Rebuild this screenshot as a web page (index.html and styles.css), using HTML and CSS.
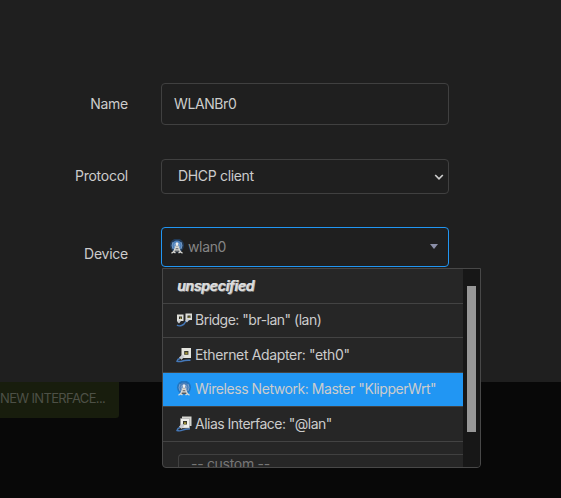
FILE: index.html
```html
<!DOCTYPE html>
<html lang="en">
<head>
<meta charset="utf-8">
<title>Add new interface</title>
<link rel="stylesheet" href="styles.css">
</head>
<body>
<svg class="symbols" width="0" height="0" aria-hidden="true">
  <symbol id="wifi" viewBox="0 0 16 16">
    <circle cx="8" cy="6.5" r="7" fill="#24568f" opacity=".5"/>
    <circle cx="8" cy="6.5" r="5" fill="#4b7fba"/>
    <path d="M4 3Q2 6.5 4 10M12 3q2 3.5 0 7M5.8 4.5q-1 2 0 4M10.2 4.5q1 2 0 4" fill="none" stroke="#86a9d0" stroke-width=".8"/>
    <path d="M8 5 4.5 13h7z" fill="#555a60"/>
    <path d="M8 5 4.5 13M8 5l3.5 8M6.5 8.5h3M5.5 10.8h5" fill="none" stroke="#d8d8d4" stroke-width="1.3"/>
    <path d="M2.5 14.3 4.5 12.8l2 1M13.5 14.3l-2-1.5-2 1" fill="none" stroke="#d8d8d4" stroke-width="1.3"/>
    <circle cx="8" cy="4.8" r="1.5" fill="#eee"/>
  </symbol>
  <symbol id="bridge" viewBox="0 0 16 16">
    <path d="M1 13q1.500 1.500 4.500.5t4-3.500 4-2" fill="none" stroke="#4578b8" stroke-width="1.4"/>
    <path d="M1 2.500h6.500V9H1zM9.500 1.500H16V8H9.500z" fill="#deded8"/>
    <path d="M3 4.500h3V7H3zM11.500 3.500h3V6h-3z" fill="#35352d"/>
    <path d="M4 5.500h1.200V7H4zM12.500 4.500h1.200V6h-1.200z" fill="#a5983b"/>
    <path d="m1 9.500 2.500-2L5 9l-2 2.500zM9 8.500l2.500-2L13 8l-2 2.500z" fill="#c8cbd0"/>
  </symbol>
  <symbol id="ethernet" viewBox="0 0 16 16">
    <path d="M14.500 13.300Q9 13 6.500 14T1 14.200Q1.500 12 4 11.500" fill="none" stroke="#4578b8" stroke-width="1.4"/>
    <path d="M5.500 1H15v10H5.500z" fill="#e4e4de"/>
    <path d="M8.200 4h4.200v3.800H8.200z" fill="#35352d"/>
    <path d="M9.200 5.200h2.300v2H9.200z" fill="#a5983b"/>
    <path d="m3 10.500 3.500-3 2 2.200-3 3z" fill="#c8cbd0"/>
  </symbol>
  <symbol id="alias" viewBox="0 0 16 16">
    <path d="M14 12.800Q9 13 6.500 14.200T1 14.500Q1.500 12.200 4 11.500" fill="none" stroke="#4578b8" stroke-width="1.4"/>
    <path d="M6 .5h9.500V10H6z" fill="#d5d5d0"/>
    <path d="M4.500 2.500h9V12h-9z" fill="#eeeeea" stroke="#999" stroke-width=".5"/>
    <path d="M7 5h4v3.500H7z" fill="#35352d"/>
    <path d="M8 6.200h2.200v2H8z" fill="#a5983b"/>
    <path d="m3 10.500 3.500-3 2 2.200-3 3z" fill="#c8cbd0"/>
  </symbol>
</svg>
<main class="modal">
  <div class="field name">
    <span class="label"><span class="t-name">Name</span></span>
    <div class="control"><span class="t-value">WLANBr0</span></div>
  </div>
  <div class="field protocol">
    <span class="label"><span class="t-protocol">Protocol</span></span>
    <div class="control"><span class="t-dhcp">DHCP client</span>
      <svg class="chevron" width="10" height="8" viewBox="0 0 10 8"><path d="m1.200 2 3.800 3.800L8.800 2" fill="none" stroke="#ccc" stroke-width="1.700"/></svg>
    </div>
  </div>
  <div class="field device">
    <span class="label"><span class="t-device">Device</span></span>
    <div class="control">
      <svg class="icon"><use href="#wifi"/></svg><span class="t-wlan">wlan0</span>
      <span class="caret"></span>
      <div class="menu">
        <ul class="options">
          <li class="unspecified"><em>unspecified</em></li>
          <li><svg class="icon"><use href="#bridge"/></svg><span class="t-bridge">Bridge: "br-lan" (lan)</span></li>
          <li><svg class="icon"><use href="#ethernet"/></svg><span class="t-eth">Ethernet Adapter: "eth0"</span></li>
          <li class="selected"><svg class="icon"><use href="#wifi"/></svg><span class="t-wireless">Wireless Network: Master "KlipperWrt"</span></li>
          <li><svg class="icon"><use href="#alias"/></svg><span class="t-alias">Alias Interface: "@lan"</span></li>
          <li class="custom"><div class="custom-input">-- custom --</div></li>
        </ul>
        <div class="scrollbar"><div class="thumb"></div></div>
      </div>
    </div>
  </div>
</main>
<div class="add-button"><span class="t-add">NEW INTERFACE...</span></div>
</body>
</html>
```
FILE: styles.css
```css
* { box-sizing: border-box; }
body {
  margin: 0;
  height: 498px;
  overflow: hidden;
  background: #080808;
  color: #ccc;
  font: 14px/20px Inter, "Liberation Sans", sans-serif;
  white-space: nowrap;
}
.symbols { position: absolute; }
.modal { height: 382px; padding-top: 83px; background: #1f1f1f; }
.field { display: grid; grid-template-columns: 128px 288px; column-gap: 33px; align-items: center; }
.label { text-align: right; }
.label span { display: inline-block; }
.control { display: flex; align-items: center; border: 1px solid #404040; border-radius: 4px; }
.name { height: 42px; margin-bottom: 34px; }
.name .control { height: 42px; padding: 0 12px 1px; }
.protocol { height: 35px; margin-bottom: 33px; }
.protocol .control { height: 35px; padding: 0 4px 1px 16px; }
.protocol .label { padding-bottom: 1px; }
.chevron { margin: 2px 0 0 auto; }
.device { height: 40px; }
.device .label { padding-top: 14px; }
.device .control { position: relative; height: 40px; padding: 0 10px 0 7px; border-color: #2196f3; }
.icon { width: 16px; height: 16px; flex: none; margin-right: 3px; }
.caret { margin: 0 0 2px auto; border: 4px solid transparent; border-top: 5px solid #8b8fa8; border-bottom: 0; }

.t-name, .t-protocol, .t-device { letter-spacing: -.25px; }
.t-value { letter-spacing: -.4px; }
.t-dhcp { letter-spacing: -.33px; }
.t-wlan { color: #858585; letter-spacing: -.35px; }
.t-bridge { letter-spacing: -.5px; }
.t-eth { letter-spacing: -.35px; }
.t-wireless { letter-spacing: -.45px; }
.t-alias { letter-spacing: -.52px; }
.t-add { font-size: 13px; letter-spacing: -.65px; }

.menu {
  position: absolute;
  z-index: 1;
  left: 0;
  top: 40px;
  width: 319px;
  height: 200px;
  display: grid;
  grid-template-columns: 1fr 17px;
  border: 1px solid #484848;
  border-radius: 0 0 4px 4px;
  background: #262626;
  overflow: hidden;
}
.options {
  display: grid;
  grid-template-rows: 35px 34px 35px 34px 35px 50px;
  height: 198px;
  margin: 0;
  padding: 0;
  list-style: none;
  overflow: hidden;
}
.options li { display: flex; align-items: center; padding: 0 0 1px 13px; border-bottom: 1px solid #434343; }
.options .selected { background: #2196f3; }
.unspecified em { padding-left: 1px; font-weight: 600; letter-spacing: -.25px; color: #ddd; text-shadow: 1px 0 0 #bbb, 1px 1px 0 #777; }
.options .custom { align-items: flex-start; padding: 12px 0 0 15px; border: 0; }
.custom-input {
  flex: 1;
  height: 38px;
  padding-left: 12px;
  line-height: 18px;
  letter-spacing: -.3px;
  border: 1px solid #404040;
  border-right: 0;
  border-radius: 4px 0 0 0;
  color: #777;
}
.scrollbar { padding: 17px 4px 0; background: #171717; }
.thumb { width: 9px; height: 146px; background: #979797; }
.add-button {
  display: flex;
  width: 119px;
  height: 36px;
  padding-bottom: 4px;
  align-items: center;
  border-radius: 0 0 3px 0;
  background: #181d0d;
  color: #4d5046;
}
```
